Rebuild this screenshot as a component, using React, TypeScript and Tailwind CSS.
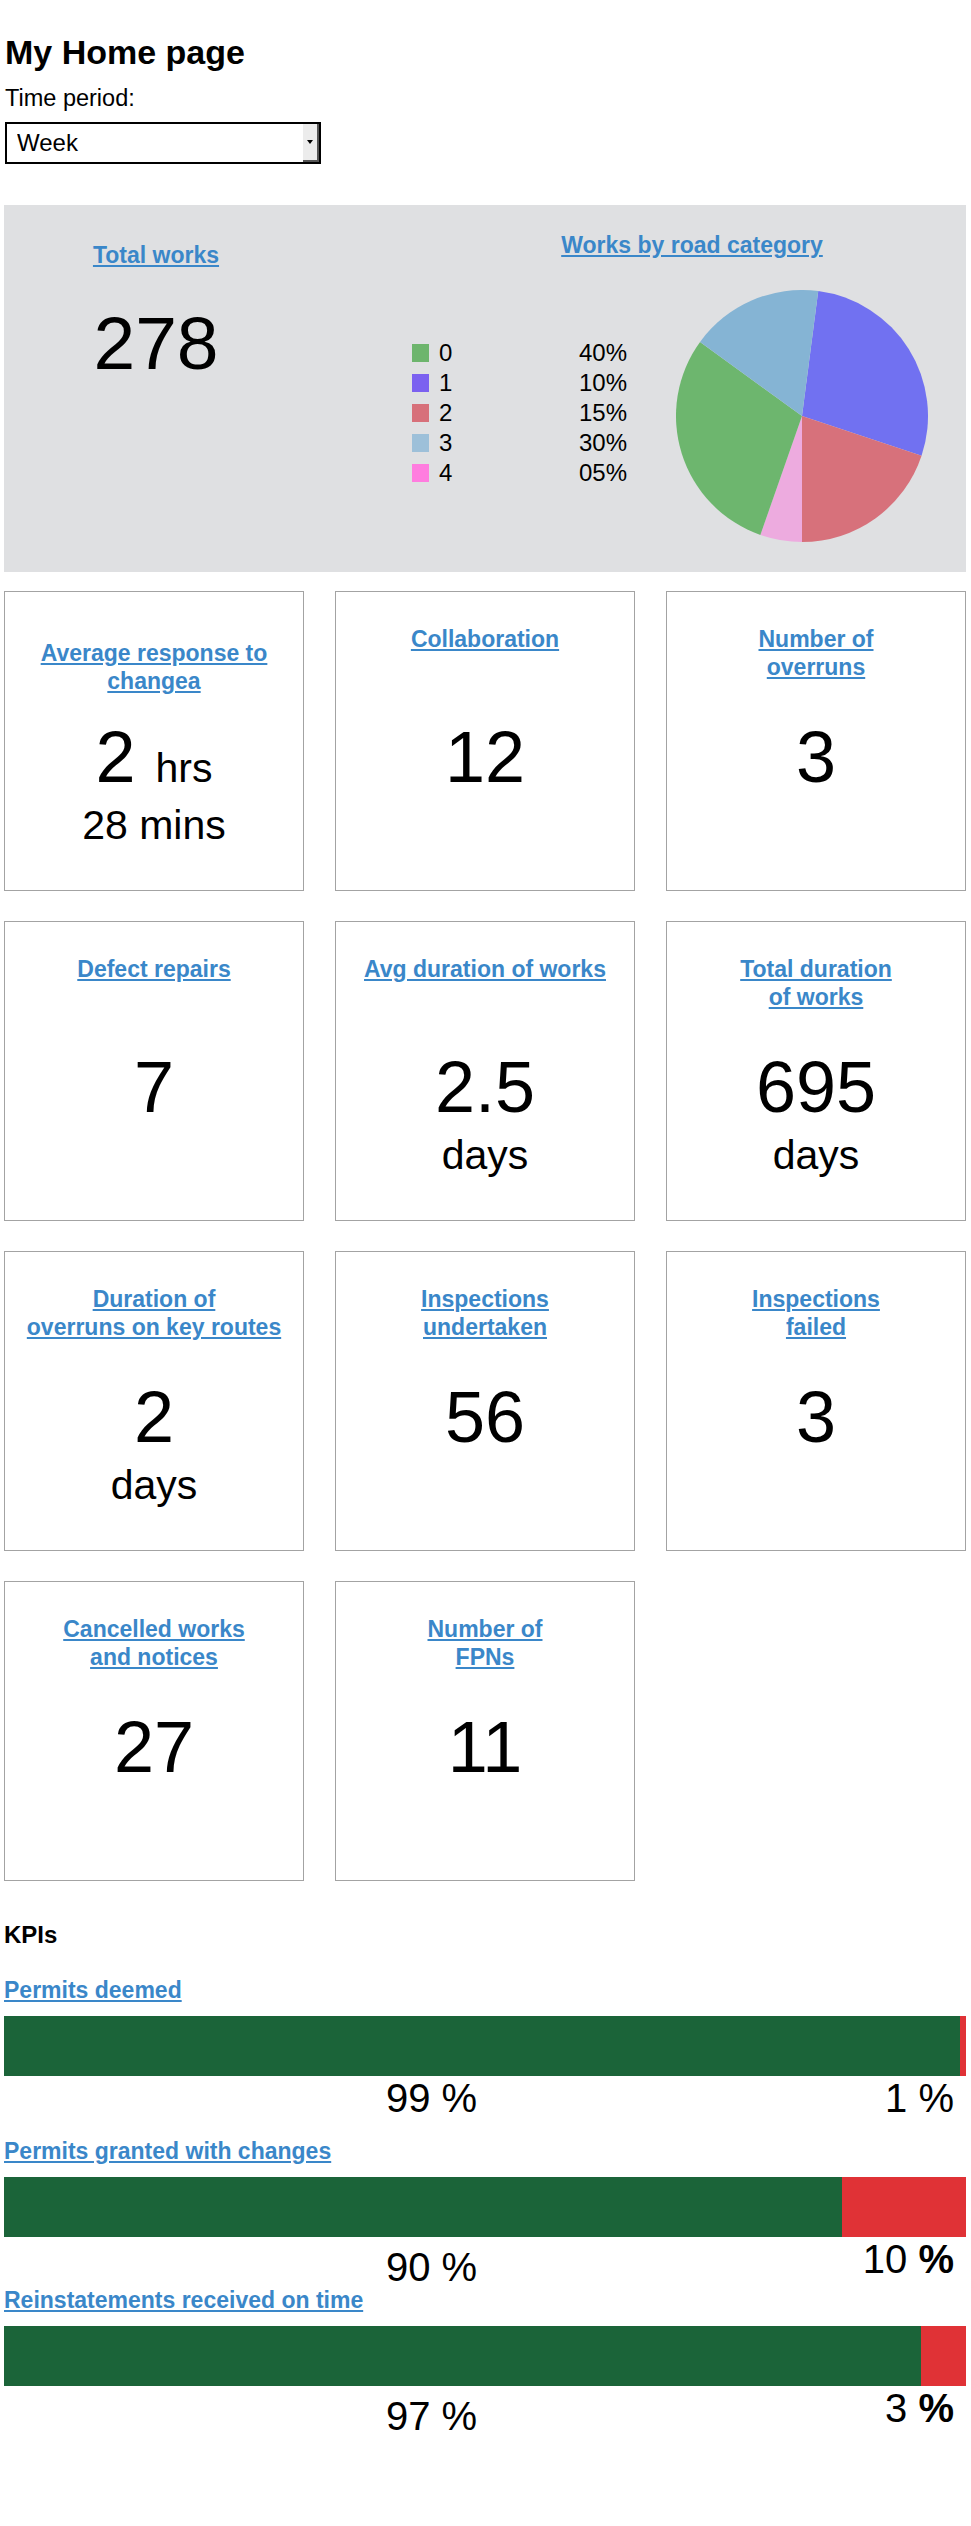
import React from 'react';

type Card = {
  title: string[];
  value: string;
  unit?: string;
  sub?: string;
  titleShift?: boolean;
};

const cards: Card[] = [
  { title: ['Average response to', 'changea'], value: '2', unit: 'hrs', sub: '28 mins', titleShift: true },
  { title: ['Collaboration'], value: '12' },
  { title: ['Number of', 'overruns'], value: '3' },
  { title: ['Defect repairs'], value: '7' },
  { title: ['Avg duration of works'], value: '2.5', sub: 'days' },
  { title: ['Total duration', 'of works'], value: '695', sub: 'days' },
  { title: ['Duration of', 'overruns on key routes'], value: '2', sub: 'days' },
  { title: ['Inspections', 'undertaken'], value: '56' },
  { title: ['Inspections', 'failed'], value: '3' },
  { title: ['Cancelled works', 'and notices'], value: '27' },
  { title: ['Number of', 'FPNs'], value: '11' },
];

const legend = [
  { label: '0', pct: '40%', color: 'bg-[#6db56d]' },
  { label: '1', pct: '10%', color: 'bg-[#7b61f0]' },
  { label: '2', pct: '15%', color: 'bg-[#d7707a]' },
  { label: '3', pct: '30%', color: 'bg-[#9dc0d9]' },
  { label: '4', pct: '05%', color: 'bg-[#ff7ddf]' },
];

// slice angles measured clockwise from 12 o'clock
const slices = [
  { from: 7.4, to: 108.4, fill: '#7171f1' },
  { from: 108.4, to: 180, fill: '#d7717b' },
  { from: 180, to: 199.3, fill: '#edabdf' },
  { from: 199.3, to: 306, fill: '#6db66e' },
  { from: 306, to: 367.4, fill: '#85b4d4' },
];

const linkCls = 'text-[#3a87c9] font-bold underline text-[23px] leading-[28px]';

const PieChart: React.FC = () => {
  const c = 126;
  const r = 126;
  const pt = (deg: number) => {
    const a = (deg * Math.PI) / 180;
    return `${(c + r * Math.sin(a)).toFixed(2)} ${(c - r * Math.cos(a)).toFixed(2)}`;
  };
  return (
    <svg width="252" height="252" viewBox="0 0 252 252" className="ml-[48px] shrink-0">
      {slices.map((s) => (
        <path
          key={s.from}
          d={`M ${c} ${c} L ${pt(s.from)} A ${r} ${r} 0 ${s.to - s.from > 180 ? 1 : 0} 1 ${pt(s.to)} Z`}
          fill={s.fill}
        />
      ))}
    </svg>
  );
};

const StatCard: React.FC<{ card: Card }> = ({ card }) => (
  <div className="h-[300px] border border-[#a3a3a3] bg-white flex flex-col items-center pt-[33px] text-center">
    <div className="h-[92px]">
      <a href="#" className={`${linkCls} inline-block ${card.titleShift ? 'mt-[14px] leading-[27px]' : ''}`}>
        {card.title.map((t, i) => (
          <React.Fragment key={i}>
            {i > 0 && <br />}
            {t}
          </React.Fragment>
        ))}
      </a>
    </div>
    <div className="text-[72px] leading-[80px] text-black">
      {card.value}
      {card.unit && (
        <>
          {' '}
          <span className="text-[41px] leading-none">{card.unit}</span>
        </>
      )}
    </div>
    {card.sub && <div className="text-[41px] leading-[56px] text-black">{card.sub}</div>}
  </div>
);

const KpiBar: React.FC<{
  title: string;
  left: string;
  right: string;
  redWidth: string;
  boldPct?: boolean;
  mt: string;
}> = ({ title, left, right, redWidth, boldPct, mt }) => (
  <div className={mt}>
    <a href="#" className={`${linkCls} block w-fit`}>{title}</a>
    <div className="mt-[12px] h-[60px] flex">
      <div className="flex-1 bg-[#1b6439]" />
      <div className={`${redWidth} bg-[#e03236]`} />
    </div>
    <div className="flex items-start h-[44px] text-[40px] leading-[44px] text-black">
      <div className={`w-[855px] shrink-0 text-center ${boldPct ? 'mt-[8px]' : ''}`}>{left} %</div>
      <div className="flex-1 text-right pr-[12px] whitespace-nowrap">
        {right} {boldPct ? <b>%</b> : '%'}
      </div>
    </div>
  </div>
);

const App: React.FC = () => {
  return (
    <div className="min-h-screen bg-white text-black font-['Liberation_Sans',Arial,sans-serif]">
      <div className="pl-[4px] pr-[5px] pt-[32px] pb-[90px]">
        <h1 className="text-[34px] font-bold leading-[40px] pl-[1px]">My Home page</h1>
        <div className="mt-[12px] text-[23.5px] leading-[28px] pl-[1px]">Time period:</div>
        <div className="relative mt-[10px] w-[316px] h-[42px] ml-[1px]">
          <select className="appearance-none w-full h-full border-2 border-black bg-white pl-[10px] text-[24px] outline-none">
            <option>Week</option>
            <option>Month</option>
            <option>Year</option>
          </select>
          <div className="absolute right-[2px] top-[2px] bottom-[2px] w-[16px] bg-[#ececec] border-r-2 border-b-2 border-[#555] flex items-center justify-center pointer-events-none">
            <div className="w-0 h-0 border-l-[3px] border-r-[3px] border-t-[4px] border-l-transparent border-r-transparent border-t-black" />
          </div>
        </div>

        {/* Summary panel */}
        <div className="mt-[41px] h-[367px] bg-[#dfe0e2] flex">
          <div className="w-[304px] flex flex-col items-center pt-[36px]">
            <a href="#" className={linkCls}>Total works</a>
            <div className="mt-[34px] text-[75px] leading-[80px]">278</div>
          </div>
          <div className="flex-1 pl-[104px] pt-[26px]">
            <div className="text-center pl-[6px]">
              <a href="#" className={linkCls}>Works by road category</a>
            </div>
            <div className="mt-[30px] flex items-center">
              <div className="flex flex-col mb-[6px]">
                {legend.map((l) => (
                  <div key={l.label} className="flex items-center h-[30px] text-[24px] leading-[30px]">
                    <div className={`w-[17px] h-[18px] ${l.color}`} />
                    <div className="ml-[10px] w-[140px]">{l.label}</div>
                    <div className="w-[49px]">{l.pct}</div>
                  </div>
                ))}
              </div>
              <PieChart />
            </div>
          </div>
        </div>

        {/* Stat cards */}
        <div className="mt-[19px] grid grid-cols-3 gap-x-[31px] gap-y-[30px]">
          {cards.map((c, i) => (
            <StatCard key={i} card={c} />
          ))}
        </div>

        {/* KPIs */}
        <h2 className="mt-[40px] text-[24px] font-bold leading-[28px]">KPIs</h2>
        <KpiBar mt="mt-[27px]" title="Permits deemed" left="99" right="1" redWidth="w-[6px]" />
        <KpiBar mt="mt-[17px]" title="Permits granted with changes" left="90" right="10" redWidth="w-[124px]" boldPct />
        <KpiBar mt="mt-[5px]" title="Reinstatements received on time" left="97" right="3" redWidth="w-[45px]" boldPct />
      </div>
    </div>
  );
};

export default App;
